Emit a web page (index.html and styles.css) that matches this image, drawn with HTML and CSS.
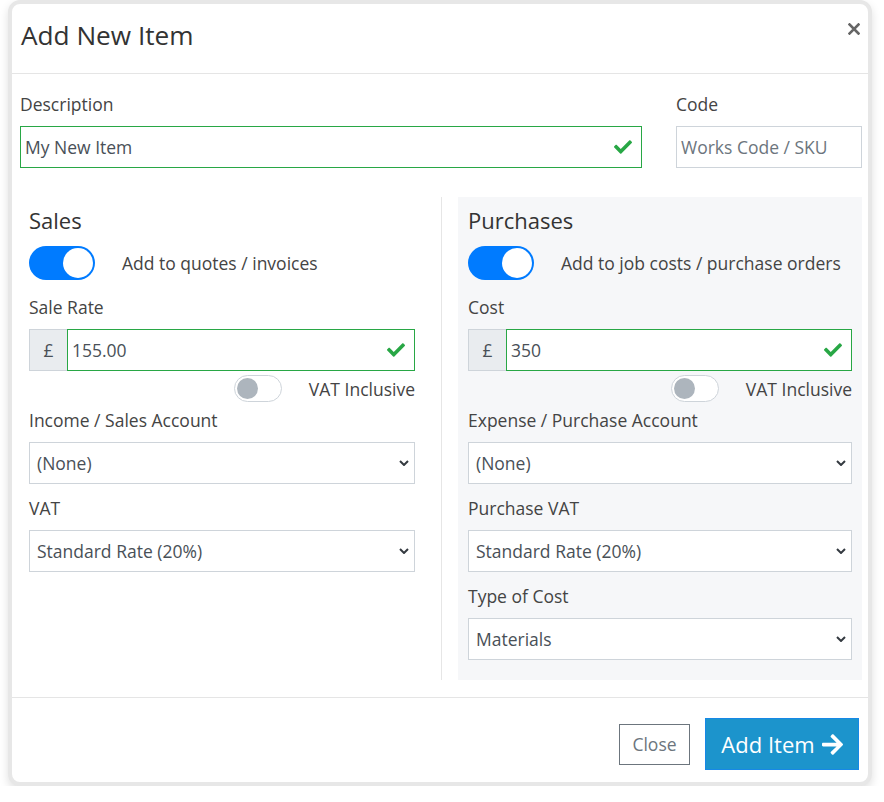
FILE: index.html
```html
<!DOCTYPE html>
<html lang="en">
<head>
<meta charset="utf-8">
<title>Add New Item</title>
<link rel="stylesheet" href="styles.css">
</head>
<body>
<div class="modal">
  <div class="modal-header">
    <h1 class="modal-title">Add New Item</h1>
    <div class="close-btn" role="button" aria-label="Close">
      <svg viewBox="0 0 12 12" width="12" height="12"><path d="M1.5 1.5L10.5 10.5M10.5 1.5L1.5 10.5" stroke="#666" stroke-width="2.6" stroke-linecap="square"/></svg>
    </div>
  </div>
  <div class="modal-body">
    <div class="top-row">
      <div class="field field-desc">
        <div class="label">Description</div>
        <div class="input valid"><span>My New Item</span>
          <svg class="check" viewBox="0 64 512 384" width="18" height="14"><path d="M173.898 439.404l-166.4-166.4c-9.997-9.997-9.997-26.206 0-36.204l36.203-36.204c9.997-9.998 26.207-9.998 36.204 0L192 312.69 432.095 72.596c9.997-9.997 26.207-9.997 36.204 0l36.203 36.204c9.997 9.997 9.997 26.206 0 36.204l-294.4 294.401c-9.998 9.997-26.207 9.997-36.204-.001z"/></svg>
        </div>
      </div>
      <div class="field field-code">
        <div class="label">Code</div>
        <div class="input"><span class="placeholder">Works Code / SKU</span></div>
      </div>
    </div>
    <div class="cols">
      <div class="col col-sales">
        <h2 class="section-title">Sales</h2>
        <div class="switch-row">
          <div class="switch on"><span class="knob"></span></div>
          <span class="switch-text">Add to quotes / invoices</span>
        </div>
        <div class="label label-gap">Sale Rate</div>
        <div class="input-group">
          <div class="addon">£</div>
          <div class="input valid grow"><span>155.00</span>
            <svg class="check" viewBox="0 64 512 384" width="18" height="14"><path d="M173.898 439.404l-166.4-166.4c-9.997-9.997-9.997-26.206 0-36.204l36.203-36.204c9.997-9.998 26.207-9.998 36.204 0L192 312.69 432.095 72.596c9.997-9.997 26.207-9.997 36.204 0l36.203 36.204c9.997 9.997 9.997 26.206 0 36.204l-294.4 294.401c-9.998 9.997-26.207 9.997-36.204-.001z"/></svg>
          </div>
        </div>
        <div class="vat-row">
          <div class="switch-sm"><span class="knob-sm"></span></div>
          <span class="switch-text">VAT Inclusive</span>
        </div>
        <div class="label label-gap-sm">Income / Sales Account</div>
        <div class="select"><span>(None)</span>
          <svg class="chev" viewBox="0 0 10 6" width="10" height="6"><path d="M1 1l4 4 4-4" fill="none" stroke="#343a40" stroke-width="2"/></svg>
        </div>
        <div class="label label-gap-md">VAT</div>
        <div class="select"><span>Standard Rate (20%)</span>
          <svg class="chev" viewBox="0 0 10 6" width="10" height="6"><path d="M1 1l4 4 4-4" fill="none" stroke="#343a40" stroke-width="2"/></svg>
        </div>
      </div>
      <div class="col col-purch">
        <h2 class="section-title">Purchases</h2>
        <div class="switch-row">
          <div class="switch on"><span class="knob"></span></div>
          <span class="switch-text">Add to job costs / purchase orders</span>
        </div>
        <div class="label label-gap">Cost</div>
        <div class="input-group">
          <div class="addon">£</div>
          <div class="input valid grow"><span>350</span>
            <svg class="check" viewBox="0 64 512 384" width="18" height="14"><path d="M173.898 439.404l-166.4-166.4c-9.997-9.997-9.997-26.206 0-36.204l36.203-36.204c9.997-9.998 26.207-9.998 36.204 0L192 312.69 432.095 72.596c9.997-9.997 26.207-9.997 36.204 0l36.203 36.204c9.997 9.997 9.997 26.206 0 36.204l-294.4 294.401c-9.998 9.997-26.207 9.997-36.204-.001z"/></svg>
          </div>
        </div>
        <div class="vat-row">
          <div class="switch-sm"><span class="knob-sm"></span></div>
          <span class="switch-text">VAT Inclusive</span>
        </div>
        <div class="label label-gap-sm">Expense / Purchase Account</div>
        <div class="select"><span>(None)</span>
          <svg class="chev" viewBox="0 0 10 6" width="10" height="6"><path d="M1 1l4 4 4-4" fill="none" stroke="#343a40" stroke-width="2"/></svg>
        </div>
        <div class="label label-gap-md">Purchase VAT</div>
        <div class="select"><span>Standard Rate (20%)</span>
          <svg class="chev" viewBox="0 0 10 6" width="10" height="6"><path d="M1 1l4 4 4-4" fill="none" stroke="#343a40" stroke-width="2"/></svg>
        </div>
        <div class="label label-gap-md">Type of Cost</div>
        <div class="select"><span>Materials</span>
          <svg class="chev" viewBox="0 0 10 6" width="10" height="6"><path d="M1 1l4 4 4-4" fill="none" stroke="#343a40" stroke-width="2"/></svg>
        </div>
      </div>
    </div>
  </div>
  <div class="modal-footer">
    <button class="btn btn-close">Close</button>
    <button class="btn btn-add">Add Item
      <svg class="arrow" viewBox="0 34 448 444" width="21" height="21"><path fill="#fff" d="M190.5 66.9l22.2-22.2c9.4-9.4 24.6-9.4 33.9 0L441 239c9.4 9.4 9.4 24.6 0 33.9L246.6 467.3c-9.4 9.4-24.6 9.4-33.9 0l-22.2-22.2c-9.5-9.5-9.3-25 .4-34.3L311.4 296H24c-13.3 0-24-10.7-24-24v-32c0-13.3 10.7-24 24-24h287.4L190.9 101.2c-9.8-9.3-10-24.8-.4-34.3z"/></svg>
    </button>
  </div>
</div>
</body>
</html>
```
FILE: styles.css
```css
* { box-sizing: border-box; }

body {
  margin: 0;
  background: #fff;
  font-family: "Open Sans", "Noto Sans", sans-serif;
  color: #444;
}

.modal {
  margin-left: 8px;
  width: 864px;
  background: #fff;
  border: 4px solid #e7e7e7;
  border-radius: 12px;
  box-shadow: 0 4px 10px rgba(0, 0, 0, 0.13);
  overflow: hidden;
}

.modal-header {
  display: flex;
  justify-content: space-between;
  align-items: flex-start;
  height: 70px;
  padding: 13px 0 0 9px;
  border-bottom: 1px solid #e5e5e5;
}

.modal-title {
  margin: 0;
  font-size: 26.2px;
  font-weight: 400;
  line-height: 36px;
  color: #333;
}

.close-btn {
  margin: 6px 8px 0 0;
  width: 12px;
  height: 12px;
  flex: none;
}
.close-btn svg { display: block; }

.modal-body {
  padding: 18px 6px 17px 8px;
}

.top-row {
  display: flex;
  gap: 34px;
}
.field-desc { width: 622px; }
.field-code { width: 186px; }

.label {
  font-size: 17.5px;
  line-height: 24px;
  color: #444;
  margin-bottom: 10px;
}
.label-gap { margin-top: 15px; }
.label-gap-sm { margin-top: 6px; }
.label-gap-md { margin-top: 12px; }

.input {
  height: 42px;
  border: 1px solid #ced4da;
  background: #fff;
  display: flex;
  align-items: center;
  justify-content: space-between;
  padding: 0 9px 0 4px;
  font-size: 17.5px;
  color: #495057;
}
.input.valid { border-color: #28a745; }
.placeholder { color: #6c757d; }
.check { fill: #28a745; display: block; }

.cols {
  display: flex;
  margin-top: 29px;
}

.col-sales {
  width: 422px;
  padding: 10px 26px 0 9px;
  border-right: 1px solid #e6e6e6;
}

.col-purch {
  margin-left: 16px;
  width: 404px;
  background: #f6f7f9;
  padding: 10px 10px 20px 10px;
}

.section-title {
  margin: 0;
  font-size: 22px;
  font-weight: 400;
  line-height: 26px;
  color: #333;
}

.switch-row {
  display: flex;
  align-items: center;
  height: 34px;
  margin-top: 13px;
}

.switch {
  width: 66px;
  height: 34px;
  border-radius: 17px;
  background: #007bff;
  padding: 2px;
  display: flex;
  justify-content: flex-end;
  flex: none;
}
.knob {
  width: 30px;
  height: 30px;
  border-radius: 50%;
  background: #fff;
}

.switch-text {
  margin-left: 27px;
  font-size: 17.5px;
  color: #444;
}

.input-group {
  display: flex;
  height: 42px;
}
.addon {
  width: 38px;
  height: 42px;
  background: #e9ecef;
  border: 1px solid #ced4da;
  border-right: 0;
  display: flex;
  align-items: center;
  justify-content: center;
  font-size: 17.5px;
  color: #495057;
}
.grow { flex: 1; }

.vat-row {
  display: flex;
  align-items: center;
  justify-content: flex-end;
  height: 27px;
  margin-top: 4px;
}
.switch-sm {
  width: 48px;
  height: 27px;
  border: 1px solid #ced4da;
  border-radius: 14px;
  background: #fff;
  padding: 2px;
  display: flex;
  align-items: center;
}
.knob-sm {
  width: 21px;
  height: 21px;
  border-radius: 50%;
  background: #adb5bd;
}

.select {
  height: 42px;
  border: 1px solid #ced4da;
  background: #fff;
  display: flex;
  align-items: center;
  justify-content: space-between;
  padding: 0 5px 0 7px;
  font-size: 17.5px;
  color: #495057;
}
.chev { display: block; }

.modal-footer {
  display: flex;
  justify-content: flex-end;
  align-items: center;
  gap: 15px;
  padding: 20px 9px 12px;
  border-top: 1px solid #e5e5e5;
}

.btn {
  font-family: "Open Sans", "Noto Sans", sans-serif;
  display: flex;
  align-items: center;
  justify-content: center;
  cursor: pointer;
}

.btn-close {
  width: 71px;
  height: 41px;
  border: 1px solid #6c757d;
  background: #fff;
  color: #6c757d;
  font-size: 17.5px;
  padding: 0;
}

.btn-add {
  width: 154px;
  height: 52px;
  border: 1px solid #1688e6;
  background: #1c94cc;
  color: #fff;
  font-size: 22px;
  padding: 0;
}
.arrow {
  display: block;
  margin-left: 7px;
}
```
